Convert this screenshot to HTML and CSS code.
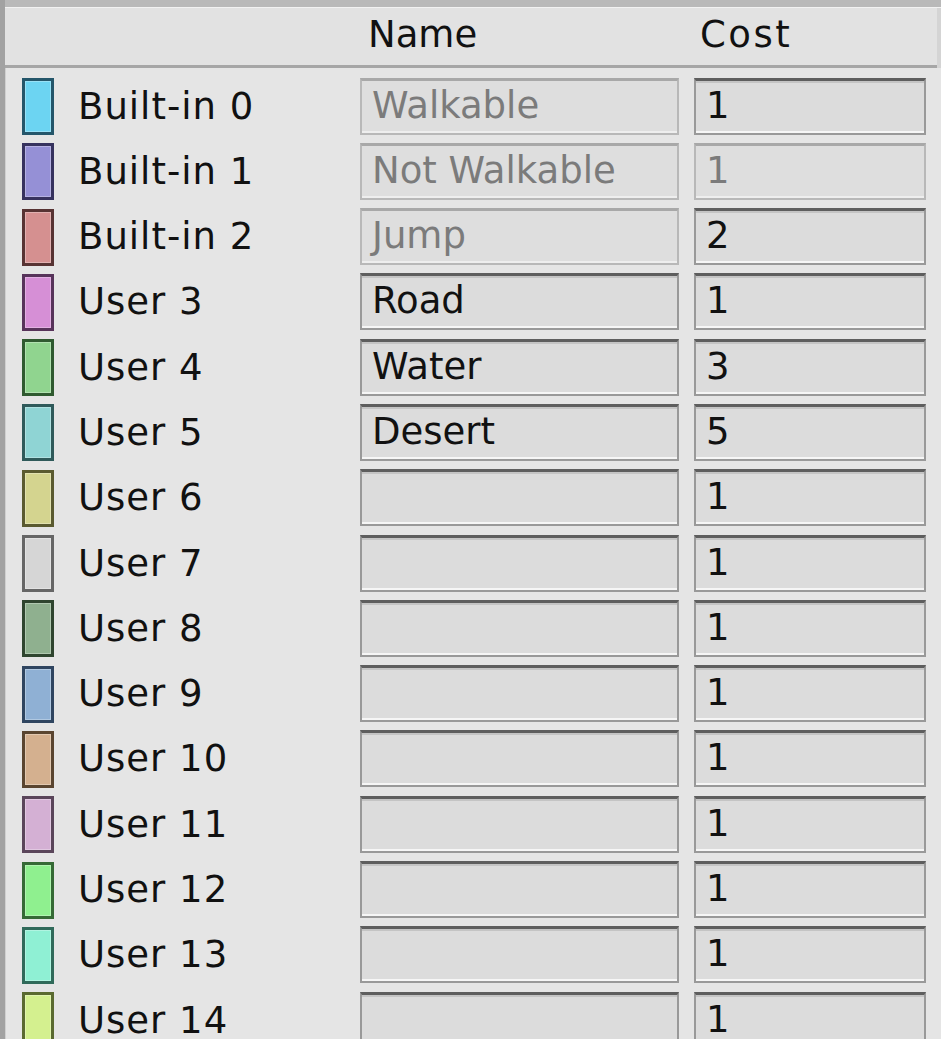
FILE: index.html
```html
<!DOCTYPE html>
<html>
<head>
<meta charset="utf-8">
<link rel="stylesheet" href="styles.css">
</head>
<body>
<div class="panel">
  <div class="topband"></div>
  <div class="header">
    <div class="h-name">Name</div>
    <div class="h-cost">Cost</div>
  </div>
  <div class="rows">
    <div class="row"><span class="sw" style="--c:#6cd4f2;--b:#24566a"></span><span class="label">Built-in 0</span><span class="field dis">Walkable</span><span class="field">1</span></div>
    <div class="row"><span class="sw" style="--c:#9590d6;--b:#36325e"></span><span class="label">Built-in 1</span><span class="field dis">Not Walkable</span><span class="field dis">1</span></div>
    <div class="row"><span class="sw" style="--c:#d59090;--b:#573333"></span><span class="label">Built-in 2</span><span class="field dis">Jump</span><span class="field">2</span></div>
    <div class="row"><span class="sw" style="--c:#d68fd6;--b:#57335a"></span><span class="label">User 3</span><span class="field">Road</span><span class="field">1</span></div>
    <div class="row"><span class="sw" style="--c:#90d48f;--b:#2f5a30"></span><span class="label">User 4</span><span class="field">Water</span><span class="field">3</span></div>
    <div class="row"><span class="sw" style="--c:#8fd4d4;--b:#2f5a5a"></span><span class="label">User 5</span><span class="field">Desert</span><span class="field">5</span></div>
    <div class="row"><span class="sw" style="--c:#d4d48f;--b:#5a5a30"></span><span class="label">User 6</span><span class="field"></span><span class="field">1</span></div>
    <div class="row"><span class="sw" style="--c:#d6d6d6;--b:#666666"></span><span class="label">User 7</span><span class="field"></span><span class="field">1</span></div>
    <div class="row"><span class="sw" style="--c:#8fb08f;--b:#2f452f"></span><span class="label">User 8</span><span class="field"></span><span class="field">1</span></div>
    <div class="row"><span class="sw" style="--c:#8fb0d4;--b:#2f4560"></span><span class="label">User 9</span><span class="field"></span><span class="field">1</span></div>
    <div class="row"><span class="sw" style="--c:#d4b08f;--b:#5a4530"></span><span class="label">User 10</span><span class="field"></span><span class="field">1</span></div>
    <div class="row"><span class="sw" style="--c:#d4b0d4;--b:#5a455a"></span><span class="label">User 11</span><span class="field"></span><span class="field">1</span></div>
    <div class="row"><span class="sw" style="--c:#8ff08f;--b:#356a35"></span><span class="label">User 12</span><span class="field"></span><span class="field">1</span></div>
    <div class="row"><span class="sw" style="--c:#8ff0d4;--b:#306a5a"></span><span class="label">User 13</span><span class="field"></span><span class="field">1</span></div>
    <div class="row"><span class="sw" style="--c:#d4f08f;--b:#5a6a30"></span><span class="label">User 14</span><span class="field"></span><span class="field">1</span></div>
  </div>
</div>
</body>
</html>
```
FILE: styles.css
```css
html, body {
  margin: 0;
  padding: 0;
  height: 100%;
  overflow: hidden;
  background: #e4e4e4;
}
body {
  font-family: "DejaVu Sans", "Liberation Sans", sans-serif;
  font-size: 37px;
  color: #111;
}
.panel {
  height: 1039px;
  overflow: hidden;
  border-left: 5px solid #a2a2a2;
  box-shadow: inset 1px 0 0 #d0d0d0;
  background: #e5e5e5;
}
.topband {
  height: 7px;
  background: #b9b9b9;
  border-bottom: 1px solid #f2f2f2;
}
.header {
  height: 57px;
  display: grid;
  grid-template-columns: 355px 334px 1fr;
  align-items: center;
  background: #e2e2e2;
  border-bottom: 3px solid #a6a6a6;
  margin-right: 4px;
  box-shadow: 4px 0 0 #d4d4d4;
}
.h-name { grid-column: 2; padding-left: 8px; padding-bottom: 4px; }
.h-cost { grid-column: 3; padding-left: 6px; padding-bottom: 4px; letter-spacing: 2.5px; }
.rows {
  display: flex;
  flex-direction: column;
  gap: 8.3px;
  padding-top: 9px;
}
.row {
  display: grid;
  grid-template-columns: 32px 306px 319px 247px;
  align-items: center;
  height: 57px;
  padding-left: 17px;
}
.sw {
  box-sizing: border-box;
  width: 32px;
  height: 57px;
  border: 3px solid var(--b);
  background: var(--c);
  box-shadow: inset 0 0 0 1px rgba(255,255,255,0.3);
  margin-top: 1px;
}
.label {
  padding-left: 24px;
  white-space: nowrap;
  letter-spacing: 1px;
}
.field {
  box-sizing: border-box;
  height: 57px;
  background: #dcdcdc;
  border: 2px solid #999;
  border-top: 3px solid #5e5e5e;
  box-shadow: inset 0 -2px 0 #f6f6f6, inset 0 2px 0 #c4c4c4;
  padding-left: 10px;
  line-height: 50px;
  white-space: nowrap;
  overflow: hidden;
}
.row .field + .field {
  margin-left: 15px;
  width: 232px;
}
.field.dis {
  color: #7b7b7b;
  border-color: #b8b8b8;
  border-top-color: #a8a8a8;
  background: #dedede;
  box-shadow: inset 0 -2px 0 #eeeeee;
}
```
